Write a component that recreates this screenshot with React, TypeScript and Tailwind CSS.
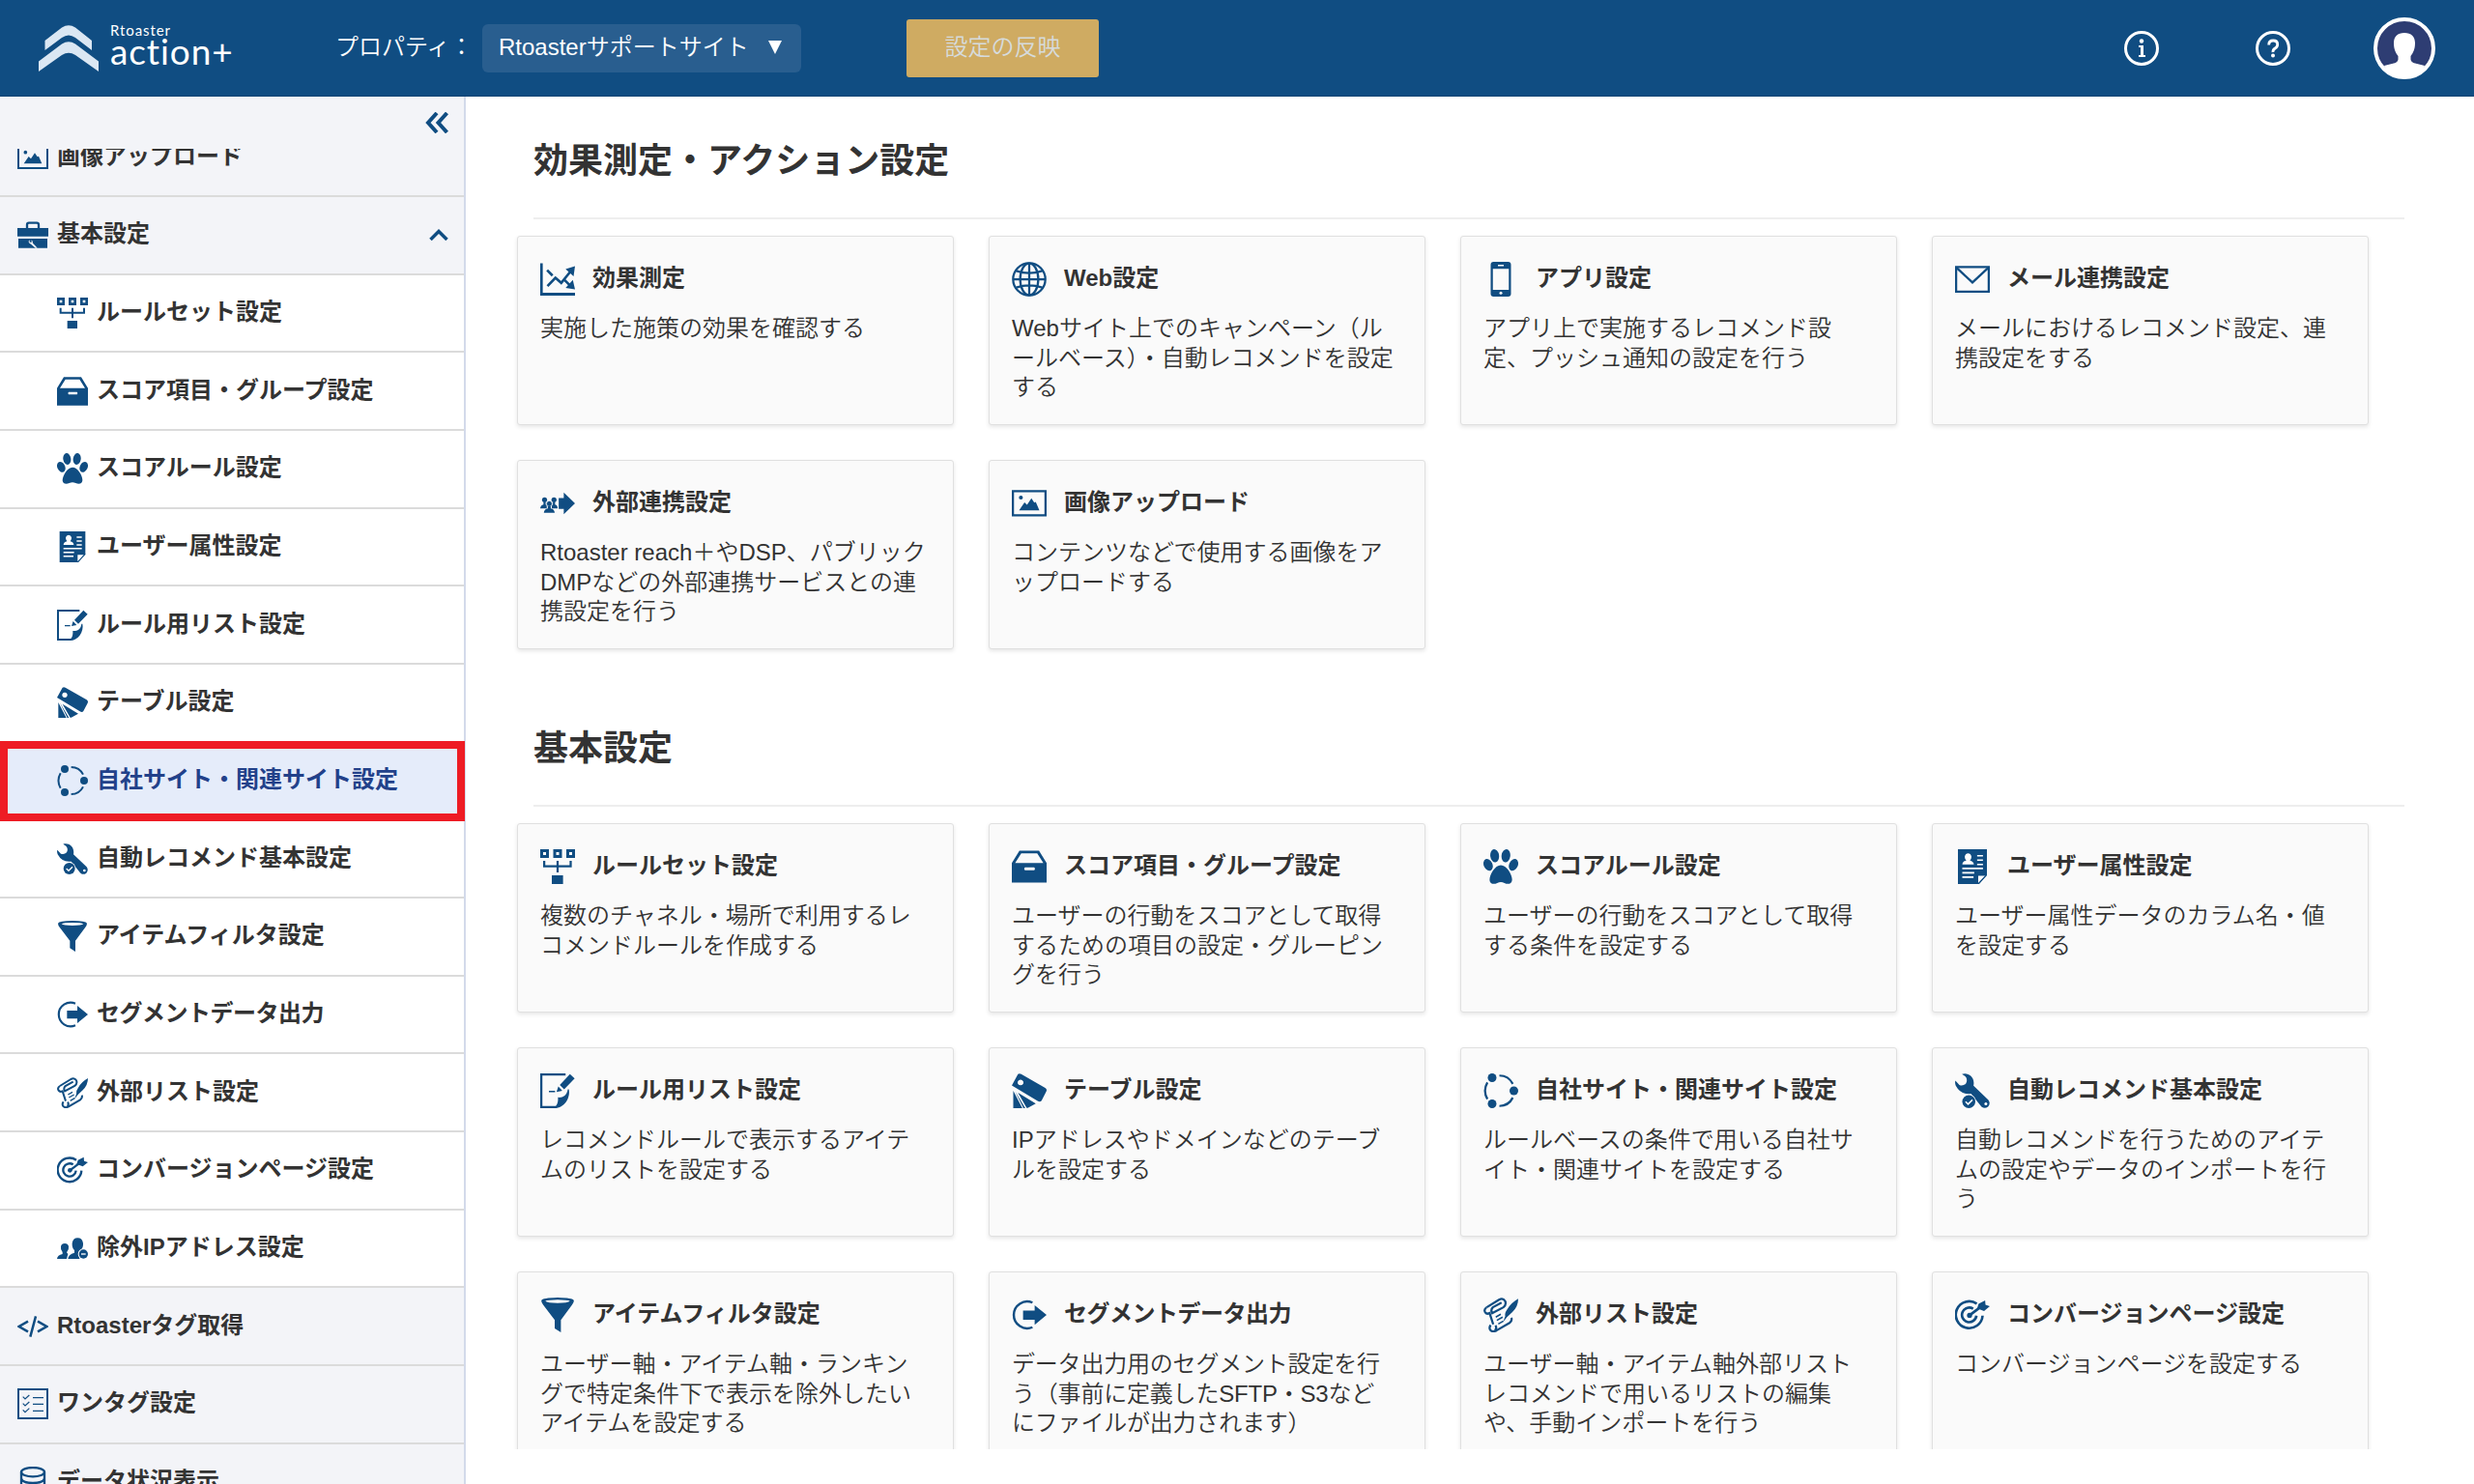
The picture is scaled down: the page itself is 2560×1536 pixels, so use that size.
import type { ReactNode } from "react"

type IconName =
  | "chart"
  | "globe"
  | "phone"
  | "mail"
  | "external"
  | "image"
  | "ruleset"
  | "drawer"
  | "paw"
  | "profile"
  | "listEdit"
  | "tags"
  | "network"
  | "wrench"
  | "funnel"
  | "export"
  | "scroll"
  | "target"
  | "usersMinus"
  | "code"
  | "checklist"
  | "database"
  | "toolbox"

// All glyphs are drawn on a 96 x 96 grid
const glyphs: Record<IconName, ReactNode> = {
  chart: (
    <>
      <path d="M0 4h7v81h89v8H0z" />
      <path d="M20 67L42 44L58 58L84 26M19 23L34 38M68 51L82 65" fill="none" stroke="currentColor" strokeWidth="7" />
      <path d="M96 12L92 40L70 20zM96 76L90 50L70 72z" />
    </>
  ),
  globe: (
    <g fill="none" stroke="currentColor" strokeWidth="6">
      <circle cx="48" cy="48" r="44.5" />
      <ellipse cx="48" cy="48" rx="25" ry="44" />
      <path d="M48 3v90M4 48h88M12 25q36 12 72 0M12 71q36-12 72 0" />
    </g>
  ),
  phone: (
    <>
      <path fillRule="evenodd" d="M28 0h40q8 0 8 8v80q0 8-8 8H28q-8 0-8-8V8q0-8 8-8zM26 19v58h44V19zM40 8v4h16V8z" />
      <circle cx="48" cy="86" r="4" fill="#fafafa" />
    </>
  ),
  mail: (
    <g fill="none" stroke="currentColor" strokeWidth="6">
      <path d="M3 14h90v68H3z" />
      <path d="M5 17l43 40l43-40" />
    </g>
  ),
  external: (
    <>
      <path d="M51 33h14V18l31 30l-31 30V63H51z" />
      <circle cx="12" cy="38" r="7" />
      <circle cx="38" cy="38" r="7" />
      <path d="M0 62q1-10 9-11v-7h6v7l3 3v8zM32 54l3-3v-7h6v7q7 1 7 11H32z" />
      <circle cx="25" cy="49" r="8" stroke="#fafafa" strokeWidth="2" />
      <path d="M10 74q1-10 11-12v-7h8v7q10 2 11 12z" />
    </>
  ),
  image: (
    <>
      <path d="M3 14h90v67H3z" fill="none" stroke="currentColor" strokeWidth="6" />
      <circle cx="25" cy="32" r="5.5" />
      <path d="M20 67L35 45L42 52L54 34L62 46L66 44L76 67z" />
    </>
  ),
  ruleset: (
    <>
      <path fillRule="evenodd" d="M0 0h24v24H0zM8 8v8h8V8zM36 0h24v24H36zM44 8v8h8V8zM72 0h24v24H72zM80 8v8h8V8z" />
      <path d="M11 32v15h73V32M48 32v32" fill="none" stroke="currentColor" strokeWidth="6" />
      <path d="M32 72h31v24H32z" />
    </>
  ),
  drawer: (
    <path
      fillRule="evenodd"
      d="M0 92V38L21 4h54l21 34v54zM26 11L9 38h78L70 11zM36 50q-4 4 0 8h26q4-4 0-8z"
    />
  ),
  paw: (
    <>
      <ellipse cx="31" cy="18" rx="12" ry="18" transform="rotate(-8 31 18)" />
      <ellipse cx="62" cy="18" rx="12" ry="18" transform="rotate(8 62 18)" />
      <ellipse cx="13" cy="43" rx="12" ry="17" transform="rotate(-25 13 43)" />
      <ellipse cx="83" cy="43" rx="12" ry="17" transform="rotate(25 83 43)" />
      <path d="M48 44C64 44 80 70 79 85C78 97 66 97 58 93Q48 88 38 93C30 97 18 97 17 85C17 70 32 44 48 44z" />
    </>
  ),
  profile: (
    <>
      <path d="M8 0h80v72L66 96H8z" />
      <path
        d="M61 18h16M61 30h16M61 42h16M20 53h57M20 65h33M20 77h31"
        fill="none"
        stroke="#fff"
        strokeWidth="4.5"
      />
      <path d="M20 42q1-9 11-11q-5-6-4-12q2-8 9-8t9 8q1 6-4 12q10 2 11 11z" fill="#fff" />
      <path d="M64 73h20L64 93z" fill="#fff" />
      <path d="M87 70L65 95" fill="none" stroke="currentColor" strokeWidth="3" />
    </>
  ),
  listEdit: (
    <>
      <path d="M70 3H3v90h42" fill="none" stroke="currentColor" strokeWidth="6" />
      <path d="M82 2L95 14L66 44L54 32zM50 36L61 48L45 51zM24 48h17v4H24z" />
      <path d="M79 44C84 68 66 96 40 96H36C46 90 50 82 49 66C60 68 74 62 76 44z" />
    </>
  ),
  tags: (
    <>
      <path
        fillRule="evenodd"
        d="M17 2Q21-1 26 2L92 40Q98 44 95 50L82 75Q78 80 71 76L0 33zM24 17a8 8 0 1 0 .1 0z"
      />
      <path d="M4 48L29 96H4zM9 49L37 96H32zM17 53L66 83L44 95H41z" />
    </>
  ),
  network: (
    <>
      <circle cx="24" cy="12" r="12" />
      <circle cx="84" cy="48" r="12" />
      <circle cx="24" cy="84" r="12" />
      <path
        d="M44 6A42 42 0 0 1 81 29M81 67A42 42 0 0 1 44 90M11 25A46 46 0 0 0 11 71"
        fill="none"
        stroke="currentColor"
        strokeWidth="6"
      />
    </>
  ),
  wrench: (
    <>
      <path d="M19 2C34-4 56 8 51 34L92 73Q99 83 91 92Q82 99 73 92L44 56Q16 60 2 34Q-1 26 1 20L12 32Q22 36 30 28Q36 16 28 8z" />
      <circle cx="85" cy="84" r="4" fill="#fff" />
      <circle cx="38" cy="78" r="20" fill="#fff" />
      <circle cx="38" cy="78" r="18" />
      <path d="M29 78l7 7l12-12" fill="none" stroke="#fff" strokeWidth="4" />
    </>
  ),
  funnel: (
    <path
      fillRule="evenodd"
      d="M3 8Q6 1 48 0Q90 1 93 8Q93 14 88 20L57 62V96L40 85V62L8 20Q3 14 3 8zM14 10Q20 15 48 15Q76 15 82 10Q76 6 48 6Q20 6 14 10z"
    />
  ),
  export: (
    <>
      <path d="M57 14A37 37 0 1 0 57 82" fill="none" stroke="currentColor" strokeWidth="6.5" />
      <path d="M31 36h32V21l33 27l-33 27V61H31z" />
    </>
  ),
  scroll: (
    <>
      <g fill="none" stroke="currentColor" strokeWidth="6">
        <path d="M9 27L43 6Q54 0 60 10Q64 20 55 27L24 43Q19 34 26 27L50 14" />
        <path d="M9 27Q0 33 5 41Q9 47 17 43L27 74" />
        <path d="M20 76Q14 84 20 91Q26 96 36 91L72 70Q80 64 77 56M32 90Q38 84 33 77" />
      </g>
      <path d="M34 54l14-8M37 63l16-9M41 73l14-8" fill="none" stroke="currentColor" strokeWidth="4" />
      <path d="M96 3Q96 24 80 40L65 54L54 68L60 52Q58 42 66 32Q76 14 96 3z" />
    </>
  ),
  target: (
    <>
      <path
        d="M60 17A37 37 0 1 0 76 50M50 31A20 20 0 1 0 59 50"
        fill="none"
        stroke="currentColor"
        strokeWidth="7"
      />
      <path d="M40 49L72 25" stroke="currentColor" strokeWidth="7" />
      <circle cx="40" cy="49" r="7" />
      <path d="M61 30L65 17L83 8L84 20L96 24L80 37z" />
    </>
  ),
  usersMinus: (
    <>
      <path d="M0 81Q1 69 17 66V60Q10 52 12 42Q14 33 24 33Q34 33 36 42Q38 52 30 61L34 66L30 81z" />
      <path d="M34 81Q35 67 54 62V54Q46 46 47 32Q50 16 64 16Q78 16 81 32Q82 46 73 54V60L70 81z" />
      <circle cx="82" cy="66" r="17" fill="#fff" />
      <circle cx="82" cy="66" r="14" />
      <path d="M75 66h14" stroke="#fff" strokeWidth="4" />
    </>
  ),
  code: (
    <path
      d="M33 32L5 48L33 64M63 32L91 48L63 64M57 16L40 80"
      fill="none"
      stroke="currentColor"
      strokeWidth="7.5"
    />
  ),
  checklist: (
    <g fill="none" stroke="currentColor">
      <path d="M3 3h90v90H3z" strokeWidth="6" />
      <path d="M17 26l7 7l13-12M17 47l7 7l13-12M17 67l7 7l13-12M48 29h33M48 49h33M48 70h33" strokeWidth="3.5" />
    </g>
  ),
  database: (
    <g fill="none" stroke="currentColor" strokeWidth="7">
      <ellipse cx="48" cy="17" rx="36" ry="14" />
      <path d="M12 17v62q4 14 36 14t36-14V17M12 37q4 14 36 14t36-14M12 58q4 14 36 14t36-14" />
    </g>
  ),
  toolbox: (
    <>
      <path d="M30 28V17q0-6 6-6h24q6 0 6 6v11" fill="none" stroke="currentColor" strokeWidth="7" />
      <path d="M0 27h96v26H0zM3 60h90v29H3z" />
      <path d="M38 64q-8 8 4 13l14 12h6L48 74q0-6-4-10v7h-6z" fill="#f3f4f8" />
    </>
  ),
}

function Glyph({ name, className }: { name: IconName; className: string }) {
  return (
    <svg viewBox="0 0 96 96" fill="currentColor" className={`shrink-0 text-[#104d82] ${className}`}>
      {glyphs[name]}
    </svg>
  )
}

interface NavItem {
  icon: IconName
  label: string
  child?: boolean
  open?: boolean
  active?: boolean
  tight?: boolean
}

const navItems: NavItem[] = [
  { icon: "image", label: "画像アップロード" },
  { icon: "toolbox", label: "基本設定", open: true },
  { icon: "ruleset", label: "ルールセット設定", child: true },
  { icon: "drawer", label: "スコア項目・グループ設定", child: true },
  { icon: "paw", label: "スコアルール設定", child: true },
  { icon: "profile", label: "ユーザー属性設定", child: true },
  { icon: "listEdit", label: "ルール用リスト設定", child: true },
  { icon: "tags", label: "テーブル設定", child: true },
  { icon: "network", label: "自社サイト・関連サイト設定", child: true, active: true },
  { icon: "wrench", label: "自動レコメンド基本設定", child: true },
  { icon: "funnel", label: "アイテムフィルタ設定", child: true },
  { icon: "export", label: "セグメントデータ出力", child: true, tight: true },
  { icon: "scroll", label: "外部リスト設定", child: true },
  { icon: "target", label: "コンバージョンページ設定", child: true },
  { icon: "usersMinus", label: "除外IPアドレス設定", child: true },
  { icon: "code", label: "Rtoasterタグ取得" },
  { icon: "checklist", label: "ワンタグ設定" },
  { icon: "database", label: "データ状況表示" },
]

interface CardItem {
  icon: IconName
  title: string
  lines: string[]
  tight?: boolean
}

const actionCards: CardItem[] = [
  { icon: "chart", title: "効果測定", lines: ["実施した施策の効果を確認する"] },
  {
    icon: "globe",
    title: "Web設定",
    lines: ["Webサイト上でのキャンペーン（ル", "ールベース）・自動レコメンドを設定", "する"],
  },
  { icon: "phone", title: "アプリ設定", lines: ["アプリ上で実施するレコメンド設", "定、プッシュ通知の設定を行う"] },
  { icon: "mail", title: "メール連携設定", lines: ["メールにおけるレコメンド設定、連", "携設定をする"] },
  {
    icon: "external",
    title: "外部連携設定",
    lines: ["Rtoaster reach＋やDSP、パブリック", "DMPなどの外部連携サービスとの連", "携設定を行う"],
  },
  { icon: "image", title: "画像アップロード", lines: ["コンテンツなどで使用する画像をア", "ップロードする"] },
]

const basicCards: CardItem[] = [
  { icon: "ruleset", title: "ルールセット設定", lines: ["複数のチャネル・場所で利用するレ", "コメンドルールを作成する"] },
  {
    icon: "drawer",
    title: "スコア項目・グループ設定",
    lines: ["ユーザーの行動をスコアとして取得", "するための項目の設定・グルーピン", "グを行う"],
  },
  { icon: "paw", title: "スコアルール設定", lines: ["ユーザーの行動をスコアとして取得", "する条件を設定する"] },
  { icon: "profile", title: "ユーザー属性設定", lines: ["ユーザー属性データのカラム名・値", "を設定する"] },
  { icon: "listEdit", title: "ルール用リスト設定", lines: ["レコメンドルールで表示するアイテ", "ムのリストを設定する"] },
  { icon: "tags", title: "テーブル設定", lines: ["IPアドレスやドメインなどのテーブ", "ルを設定する"] },
  {
    icon: "network",
    title: "自社サイト・関連サイト設定",
    lines: ["ルールベースの条件で用いる自社サ", "イト・関連サイトを設定する"],
  },
  {
    icon: "wrench",
    title: "自動レコメンド基本設定",
    lines: ["自動レコメンドを行うためのアイテ", "ムの設定やデータのインポートを行", "う"],
  },
  {
    icon: "funnel",
    title: "アイテムフィルタ設定",
    lines: ["ユーザー軸・アイテム軸・ランキン", "グで特定条件下で表示を除外したい", "アイテムを設定する"],
  },
  {
    icon: "export",
    title: "セグメントデータ出力",
    lines: ["データ出力用のセグメント設定を行", "う（事前に定義したSFTP・S3など", "にファイルが出力されます）"],
    tight: true,
  },
  {
    icon: "scroll",
    title: "外部リスト設定",
    lines: ["ユーザー軸・アイテム軸外部リスト", "レコメンドで用いるリストの編集", "や、手動インポートを行う"],
  },
  { icon: "target", title: "コンバージョンページ設定", lines: ["コンバージョンページを設定する"] },
]

function Header() {
  return (
    <header className="flex h-[100px] shrink-0 items-center border-b border-[#0d4373] bg-[#104d82] text-white">
      {/* Logo */}
      <div className="flex w-[309px] shrink-0 pl-10">
        <svg viewBox="0 0 62 48" className="h-12 w-[62px] text-[#dbe7f3]" fill="currentColor">
          <path d="M6.5 16L24 2.5Q31 -2 38 2.5L55 16V26L38 13Q31 8 24 13L6.5 26z" />
          <path d="M0 37.5L24 19.500Q31 15 38 19.500L62 37.500V48L38 31Q31 26.500 24 31L0 48z" />
        </svg>
        <div className="-mt-[2px] ml-3 flex flex-col font-['Lato',sans-serif]">
          <span className="h-[14px] text-[15px] leading-[14px] tracking-[0.9px]">Rtoaster</span>
          <span className="h-[30px] text-[37px] leading-[30px] tracking-[0.9px]">action+</span>
        </div>
      </div>

      {/* Property selector */}
      <span className="ml-[38px] w-[152px] pb-[2px] text-2xl font-[350]">プロパティ：</span>
      <button className="flex h-[50px] w-[330px] items-center rounded-md bg-[#295e8f] pl-[17px] text-left text-2xl font-[350]">
        <span className="w-[278px] pb-[2px] whitespace-nowrap">Rtoasterサポートサイト</span>
        <svg viewBox="0 0 16 16" className="mb-[2px] h-4 w-4" fill="currentColor">
          <path d="M1 1h14L8 15z" />
        </svg>
      </button>
      <button className="ml-[109px] h-[60px] w-[199px] rounded-[3px] bg-[#cfab62] pb-[2px] text-2xl font-[350] text-[#d6dbdc]">
        設定の反映
      </button>

      {/* Info, help and account */}
      <div className="ml-auto flex items-center pr-10">
        <svg viewBox="0 0 36 36" className="h-9 w-9" fill="currentColor">
          <circle cx="18" cy="18" r="16.500" fill="none" stroke="currentColor" strokeWidth="3" />
          <circle cx="18" cy="10.500" r="2.200" />
          <path d="M15 15h5v10h2v2h-7v-2h2v-8h-2z" />
        </svg>
        <svg viewBox="0 0 36 36" className="ml-[100px] h-9 w-9" fill="none" stroke="currentColor">
          <circle cx="18" cy="18" r="16.500" strokeWidth="3" />
          <path d="M13.700 14.500q0-4.500 4.500-4.500t4.500 4q0 2.500-2.500 4t-2.200 4" strokeWidth="2.800" />
          <circle cx="18" cy="25.500" r="2" fill="currentColor" stroke="none" />
        </svg>
        <svg viewBox="0 0 64 64" className="ml-[86px] h-16 w-16">
          <circle cx="32" cy="32" r="30" fill="#2e3d73" stroke="#fff" strokeWidth="4" />
          <path
            d="M32 16C39 16 43 20 43 26.500C43 33 41 37 38.500 40V43.500Q39 46.500 43 47.500L53 50L50 56Q42 62 32 62Q22 62 14 56L11 50L21 47.500Q25 46.500 25.500 43.500V40C23 37 21 33 21 26.500C21 20 25 16 32 16z"
            fill="#fff"
          />
        </svg>
      </div>
    </header>
  )
}

function Sidebar() {
  return (
    <aside className="relative flex min-h-0 w-[482px] shrink-0 flex-col border-r-2 border-[#d3daea] bg-[#f3f4f8]">
      <div className="flex h-[54px] shrink-0 justify-end pt-4 pr-4">
        <svg viewBox="0 0 24 22" className="h-[22px] w-6 text-[#104d82]" fill="none" stroke="currentColor" strokeWidth="4">
          <path d="M12 1L3 11L12 21M22.500 1L13.500 11L22.500 21" />
        </svg>
      </div>

      <div className="min-h-0 flex-1 overflow-hidden">
        <nav className="-mt-[30.700px]">
          {navItems.map((item) => (
            <div
              key={item.label}
              className={`flex h-[80.680px] items-center border-b-2 border-[#dbdbdb] text-2xl font-bold ${
                item.child ? "pl-[59px]" : "pl-[18px]"
              } ${
                item.active
                  ? "bg-[#e5ecfa] text-[#22418a]"
                  : item.child
                    ? "bg-white text-[#333]"
                    : "text-[#333]"
              }`}
            >
              <Glyph name={item.icon} className="h-8 w-8" />
              <span
                className={`ml-[9px] pb-[2px] leading-8 whitespace-nowrap ${item.tight ? "tracking-[-0.5px]" : ""}`}
              >
                {item.label}
              </span>
              {item.open && (
                <svg
                  viewBox="0 0 20 12"
                  className="mr-4 ml-auto h-3 w-5 text-[#104d82]"
                  fill="none"
                  stroke="currentColor"
                  strokeWidth="3.500"
                >
                  <path d="M1.500 11L10 2.500L18.500 11" />
                </svg>
              )}
            </div>
          ))}
        </nav>
      </div>

      {/* Highlight frame round the active entry */}
      <div className="absolute top-[667px] left-0 h-[83px] w-[481px] border-8 border-[#ee1c24]" />
    </aside>
  )
}

function Card({ icon, title, lines, tight }: CardItem) {
  return (
    <div className="h-[196px] rounded-[3px] border border-[#e0e0e0] bg-[#fafafa] pt-[26px] pl-[23px] text-2xl whitespace-nowrap shadow-[0_2px_4px_rgba(0,0,0,0.1)]">
      <div className="flex h-9 items-center">
        <Glyph name={icon} className="h-9 w-9" />
        <h3 className={`ml-[18px] pb-[3px] leading-8 font-bold ${tight ? "tracking-[-0.5px]" : ""}`}>{title}</h3>
      </div>
      <p className={`mt-[18px] leading-[30.500px] font-[350] ${tight ? "tracking-[-0.2px]" : ""}`}>
        {lines.map((line) => (
          <span key={line} className="block">
            {line}
          </span>
        ))}
      </p>
    </div>
  )
}

function Section({ title, cards }: { title: string; cards: CardItem[] }) {
  return (
    <section className="pl-[53px]">
      <h2 className="ml-[17px] w-[1936px] border-b-2 border-[#eeeeee] pb-8 text-4xl leading-[52px] font-bold">
        {title}
      </h2>
      <div className="mt-[17px] grid w-[1916px] grid-cols-4 gap-9">
        {cards.map((card) => (
          <Card key={card.title} {...card} />
        ))}
      </div>
    </section>
  )
}

export default function App() {
  return (
    <div className="flex h-[1536px] w-[2560px] flex-col overflow-hidden bg-white font-['Liberation_Sans','Noto_Sans_CJK_JP',sans-serif] text-[#333]">
      <Header />
      <div className="flex min-h-0 flex-1">
        <Sidebar />
        <main className="h-[1400px] flex-1 overflow-hidden pt-[41px]">
          <Section title="効果測定・アクション設定" cards={actionCards} />
          <div className="h-[77px]" />
          <Section title="基本設定" cards={basicCards} />
        </main>
      </div>
    </div>
  )
}
